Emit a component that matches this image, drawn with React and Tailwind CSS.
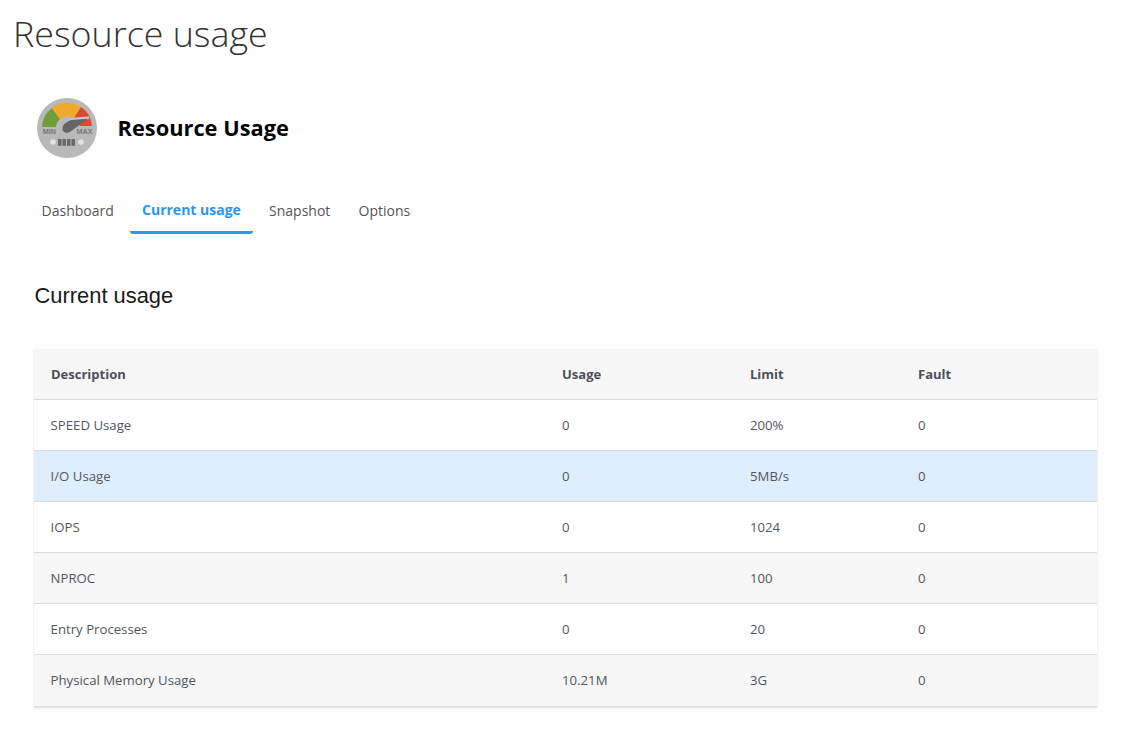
import React from "react";

const rows = [
  { name: "SPEED Usage", usage: "0", limit: "200%", fault: "0", bg: "bg-white" },
  { name: "I/O Usage", usage: "0", limit: "5MB/s", fault: "0", bg: "bg-[#dfeefd]" },
  { name: "IOPS", usage: "0", limit: "1024", fault: "0", bg: "bg-white" },
  { name: "NPROC", usage: "1", limit: "100", fault: "0", bg: "bg-[#f7f7f7]" },
  { name: "Entry Processes", usage: "0", limit: "20", fault: "0", bg: "bg-white" },
  { name: "Physical Memory Usage", usage: "10.21M", limit: "3G", fault: "0", bg: "bg-[#f7f7f7]" }
];

const tabs = ["Dashboard", "Current usage", "Snapshot", "Options"];

function GaugeIcon() {
  return (
    <svg width="60" height="60" viewBox="0 0 60 60">
      <circle cx="30" cy="30" r="30" fill="#b9b9b9" />
      <path d="M5 29 A25 25 0 0 1 15 10 L23 21 A12 12 0 0 0 19 29 Z" fill="#6f9e3a" />
      <path d="M15 10 A25 25 0 0 1 44 9 L37 20 A13 13 0 0 0 23 21 Z" fill="#efa92b" />
      <path d="M44 9 A25 25 0 0 1 55 28 L43 28 A13 13 0 0 0 37 20 Z" fill="#dd4a34" />
      <path d="M30 24 C32 21 35 20 38 19.5 L52.5 18.5 L51.5 21.5 L36 24 Z" fill="#c9c9c9" />
      <path d="M25.5 31.5 C25.5 27.5 27 25.5 29.5 24.5 C31.5 22.8 34 22 36.3 21.8 L51.3 20.8 L39 29.5 L33 34 C29.5 35.5 25.8 34.5 25.5 31.5 Z" fill="#666" />
      <text x="5.8" y="36" fontSize="7.2" fontWeight="700" fill="#777" fontFamily="'Liberation Sans', sans-serif">MIN</text>
      <text x="39.6" y="36" fontSize="7.2" fontWeight="700" fill="#777" fontFamily="'Liberation Sans', sans-serif">MAX</text>
      <circle cx="16" cy="44" r="2.8" fill="#e3e3e3" />
      <circle cx="44" cy="44" r="2.8" fill="#e3e3e3" />
      <rect x="21" y="41" width="3.5" height="6.8" fill="#686868" />
      <rect x="25.5" y="41" width="3.5" height="6.8" fill="#686868" />
      <rect x="30" y="41" width="3.5" height="6.8" fill="#686868" />
      <rect x="34.5" y="41" width="3.5" height="6.8" fill="#686868" />
    </svg>
  );
}

export default function App() {
  return (
    <div className="min-h-[737px] bg-white font-['Open_Sans',sans-serif]">
      <h1 className="pl-[13px] pt-[8px] text-[35.8px] font-light leading-[50px] text-[#333]">Resource usage</h1>

      <div className="mt-[40px] flex items-center pl-[37px]">
        <GaugeIcon />
        <h2 className="ml-[20.6px] text-[21.8px] font-bold leading-[30px] text-black">Resource Usage</h2>
      </div>

      <nav className="mt-[33px] flex gap-[4.2px] pl-[29.6px]">
        {tabs.map((tab) => (
          <a
            className={`h-[43px] rounded-b-[3px] px-3 text-[14px] leading-[24px] ${tab === "Current usage" ? "border-b-[3px] border-[#2f96ee] pt-[7px] font-bold text-[#2f96ee]" : "pt-[8px] text-[#555]"}`}
            key={tab}
          >
            {tab}
          </a>
        ))}
      </nav>

      <h3 className="mt-[48px] pl-[34.5px] font-['Liberation_Sans',sans-serif] text-[21.9px] leading-[28px] text-[#1a1a1a]">Current usage</h3>

      <div className="ml-[34px] mr-[26px] mt-[39px] shadow-[0_1px_2px_rgba(0,0,0,0.15)]">
        <table className="w-full table-fixed border-collapse text-[13.2px] text-[#52565e]">
          <colgroup>
            <col className="w-[511px]" />
            <col className="w-[188px]" />
            <col className="w-[168px]" />
            <col />
          </colgroup>
          <thead>
            <tr className="h-[50px] border-b border-[#dcdcdc] bg-[#f7f7f7] text-left">
              <th className="pl-[17px] pt-[2px] text-[13px] font-bold text-[#4f4f57]">Description</th>
              <th className="pl-[17px] pt-[2px] text-[13px] font-bold text-[#4f4f57]">Usage</th>
              <th className="pl-[17px] pt-[2px] text-[13px] font-bold text-[#4f4f57]">Limit</th>
              <th className="pl-[17px] pt-[2px] text-[13px] font-bold text-[#4f4f57]">Fault</th>
            </tr>
          </thead>
          <tbody>
            {rows.map((row, index) => (
              <tr className={`${index === rows.length - 1 ? "h-[52px]" : "h-[51px]"} border-b border-[#dcdcdc] ${row.bg}`} key={row.name}>
                <td className="pl-[16.6px] pt-[2px]">{row.name}</td>
                <td className="pl-[17px] pt-[2px]">{row.usage}</td>
                <td className="pl-[17px] pt-[2px]">{row.limit}</td>
                <td className="pl-[17px] pt-[2px]">{row.fault}</td>
              </tr>
            ))}
          </tbody>
        </table>
      </div>
    </div>
  );
}
